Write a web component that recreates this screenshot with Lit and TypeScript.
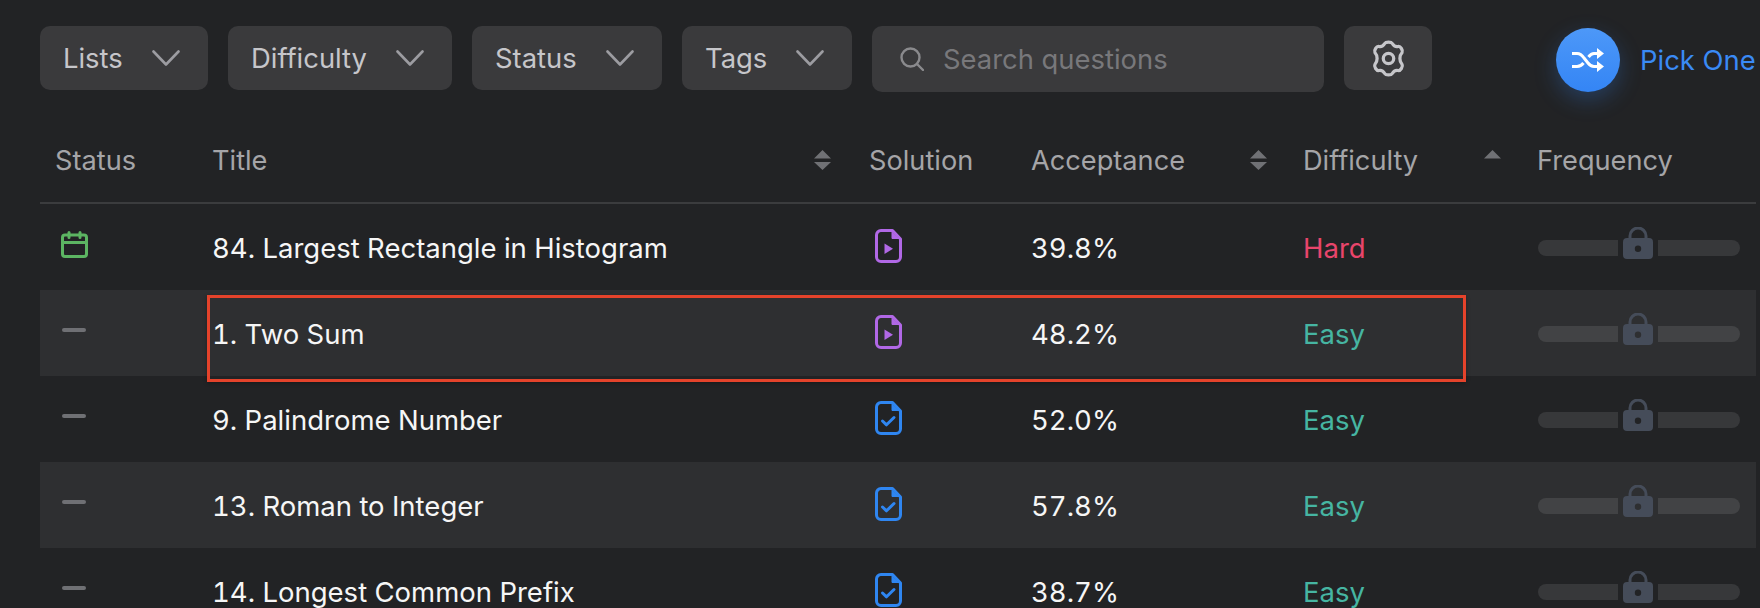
import { css, html, LitElement, svg } from "lit";
import { customElement } from "lit/decorators.js";

type Row = { title: string; icon: "play" | "check"; acc: string; diff: "Hard" | "Easy"; status: "todo" | "none" };

const ROWS: Row[] = [
  { title: "84. Largest Rectangle in Histogram", icon: "play", acc: "39.8%", diff: "Hard", status: "todo" },
  { title: "1. Two Sum", icon: "play", acc: "48.2%", diff: "Easy", status: "none" },
  { title: "9. Palindrome Number", icon: "check", acc: "52.0%", diff: "Easy", status: "none" },
  { title: "13. Roman to Integer", icon: "check", acc: "57.8%", diff: "Easy", status: "none" },
  { title: "14. Longest Common Prefix", icon: "check", acc: "38.7%", diff: "Easy", status: "none" },
];

const chevron = html`<svg class="chev" viewBox="0 0 28 16" fill="none" stroke="currentColor" stroke-width="2.6" stroke-linecap="round" stroke-linejoin="round"><path d="M1.5 1.5 14 14.5 26.5 1.5" /></svg>`;

const searchIcon = html`<svg class="search-ico" viewBox="0 0 24 24" fill="none" stroke="currentColor" stroke-width="2.4" stroke-linecap="round"><circle cx="10.5" cy="10.5" r="9" /><path d="m17 17 6 6" /></svg>`;

const gearIcon = html`<svg class="gear" viewBox="0 0 30 34" fill="none" stroke="currentColor" stroke-width="3" stroke-linejoin="round"><path d="M11.500 3.200C12.500 1.500 17.500 1.500 18.500 3.200 19.800 5.500 21.500 6.500 23.800 6 26 5.500 28.500 9.500 27.500 11.500 24.800 14.500 24.800 19.500 27.500 22.500 28.500 24.500 26 28.500 23.800 28 21.500 27.500 19.800 28.500 18.500 30.800 17.500 32.500 12.500 32.500 11.500 30.800 10.200 28.500 8.500 27.500 6.200 28 4 28.500 1.500 24.500 2.500 22.500 5.200 19.500 5.200 14.500 2.500 11.500 1.500 9.500 4 5.500 6.200 6 8.500 6.500 10.200 5.500 11.500 3.200z" /><circle cx="15" cy="17" r="4.800" /></svg>`;

const shuffleIcon = html`<svg class="shuffle" viewBox="0 0 32 24" fill="none" stroke="#fff" stroke-width="3" stroke-linejoin="round"><path d="M0 5.500h5c3 0 5 1.500 7 4.500l4 5c1.500 2 4 3.500 6 3.500h4" /><path d="M0 18.500h5c3 0 5-1.500 6.500-3.500M16.500 9c1.500-2 3.500-3.500 5.500-3.500h4" /><path d="M25 0l7 5.500-7 5.500zM25 13l7 5.500-7 5.500z" fill="#fff" stroke="none" /></svg>`;

const sortBoth = html`<svg class="sort" viewBox="0 0 17 20"><path d="M8.500 0 17 8.500H0zM0 12h17l-8.500 8z" /></svg>`;
const sortUp = html`<svg class="sort up" viewBox="0 0 17 20"><path d="M8.500 0 17 8.500H0z" /></svg>`;

const calendar = html`<svg class="cal" viewBox="0 0 27 27" fill="none" stroke="currentColor" stroke-width="3" stroke-linecap="round" stroke-linejoin="round"><rect x="1.500" y="4" width="24" height="21.500" rx="2.500" /><path d="M1.500 11.500h24M8 1.500v5M19 1.500v5" /></svg>`;

const fileIcon = (kind: Row["icon"]) => html`<svg class="file ${kind}" viewBox="0 0 27 34" fill="none" stroke="currentColor" stroke-width="3" stroke-linecap="round" stroke-linejoin="round">
  <path d="M6 1.500h11.500l8 8.500v18a4.500 4.500 0 0 1-4.500 4.500H6A4.500 4.500 0 0 1 1.500 28V6A4.500 4.500 0 0 1 6 1.500z" />
  ${kind === "play"
    ? svg`<path d="M17 3v6.500h7z" fill="currentColor" stroke-width="1" /><path d="M9.500 14.500v10.500l8.500-5.250z" fill="currentColor" stroke="none" />`
    : svg`<path d="M17 3v6.500h7z" fill="currentColor" stroke-width="1" /><path d="m7.500 20 4 3.800 7.500-7.300" />`}
</svg>`;

const lockIcon = html`<svg class="lock" viewBox="0 0 30 32"><path d="M7 13V9a8 8 0 0 1 16 0v4" fill="none" stroke="currentColor" stroke-width="3" /><path fill-rule="evenodd" fill="currentColor" d="M4 11h22a4 4 0 0 1 4 4v13a4 4 0 0 1-4 4H4a4 4 0 0 1-4-4V15a4 4 0 0 1 4-4zM15 18.500a3.200 3.200 0 1 0 0 6.400 3.200 3.200 0 0 0 0-6.400z" /></svg>`;

@customElement("app-root")
class AppRoot extends LitElement {
  static styles = css`
    :host {
      display: block;
      height: 608px;
      overflow: hidden;
      background: #222325;
      font-family: Inter, "Liberation Sans", sans-serif;
      font-size: 27.4px;
    }
    .toolbar {
      display: flex;
      align-items: flex-start;
      gap: 20px;
      padding: 26px 0 0 40px;
      height: 66px;
    }
    .toolbar > * {
      flex: none;
    }
    .btn {
      display: flex;
      align-items: center;
      justify-content: space-between;
      box-sizing: border-box;
      height: 64px;
      padding: 0 28px 0 23px;
      border-radius: 10px;
      background: #3a3a3c;
      color: #c6c6ca;
    }
    .lists {
      width: 168px;
    }
    .difficulty {
      width: 224px;
    }
    .status-btn {
      width: 190px;
    }
    .tags {
      width: 170px;
    }
    .chev {
      width: 28px;
      height: 16px;
      color: #9c9ca1;
    }
    .search {
      display: flex;
      align-items: center;
      gap: 19px;
      box-sizing: border-box;
      width: 452px;
      height: 66px;
      padding: 0 28px;
      border-radius: 10px;
      background: #3a3a3c;
      color: #78787b;
    }
    .search-ico {
      width: 24px;
      height: 24px;
      color: #8a8a8d;
    }
    .gear-btn {
      justify-content: center;
      width: 88px;
      padding: 0;
    }
    .gear {
      width: 33px;
      height: 37px;
      color: #c6c6ca;
    }
    .pick {
      display: flex;
      align-items: center;
      gap: 20px;
      margin: 2px 0 0 104px;
      color: #3a8af5;
      white-space: nowrap;
    }
    .circle {
      display: flex;
      align-items: center;
      justify-content: center;
      width: 64px;
      height: 64px;
      border-radius: 50%;
      background: linear-gradient(#4d98f8, #3485f5);
      box-shadow: 0 8px 22px rgba(52, 133, 245, 0.28);
    }
    .shuffle {
      width: 32px;
      height: 24px;
    }
    .table {
      margin: 0 4px 0 40px;
    }
    .head,
    .row {
      display: grid;
      grid-template-columns: 158px 656px 162px 272px 234px 234px;
    }
    .head {
      box-sizing: border-box;
      height: 112px;
      padding-top: 26px;
      align-items: center;
      border-bottom: 2px solid #3b3c3e;
      color: #a5a5a8;
      font-size: 27.2px;
    }
    .hcell {
      display: flex;
      align-items: center;
      justify-content: space-between;
      padding: 0 21px 0 15px;
    }
    .hcell.title {
      padding: 0 23px 0 14px;
    }
    .sort {
      width: 17px;
      height: 20px;
      fill: #707175;
    }
    .row {
      position: relative;
      height: 86px;
      align-items: center;
      color: #f6f6f6;
      font-size: 27.5px;
      font-variant-numeric: tabular-nums;
    }
    .row.alt {
      background: #2e2f31;
    }
    .cell {
      padding: 2px 0 0 15px;
    }
    .cell.title {
      padding-left: 14px;
    }
    .status {
      display: flex;
      align-items: center;
      padding-left: 22px;
      padding-bottom: 6px;
    }
    .cal {
      width: 27px;
      height: 27px;
      margin-left: -1px;
      color: #5cb562;
    }
    .dash {
      width: 24px;
      height: 4px;
      border-radius: 2px;
      background: #6f7074;
    }
    .file {
      display: block;
      width: 27px;
      height: 34px;
      margin: 0 0 5px 6px;
    }
    .file.play {
      color: #b168e6;
    }
    .file.check {
      color: #2f86f1;
    }
    .hard {
      color: #e8456b;
    }
    .easy {
      color: #46b5a2;
    }
    .freq {
      display: flex;
      align-items: flex-end;
      gap: 5px;
      padding: 0 0 0 16px;
      margin-top: -8px;
    }
    .bar {
      height: 16px;
      width: 80px;
      margin-bottom: 3px;
      background: #37383a;
    }
    .bar.l {
      border-radius: 8px 0 0 8px;
    }
    .bar.r {
      width: 82px;
      border-radius: 0 8px 8px 0;
    }
    .alt .bar {
      background: #424345;
    }
    .lock {
      width: 30px;
      height: 32px;
      color: #454c59;
    }
    .mark {
      position: absolute;
      left: 167px;
      top: 5px;
      width: 1259px;
      height: 87px;
      box-sizing: border-box;
      border: 3px solid #e5432b;
      box-shadow: 0 1px 4px rgba(0, 0, 0, 0.3);
      pointer-events: none;
    }
  `;

  render() {
    return html`
      <div class="toolbar">
        <div class="btn lists">Lists ${chevron}</div>
        <div class="btn difficulty">Difficulty ${chevron}</div>
        <div class="btn status-btn">Status ${chevron}</div>
        <div class="btn tags">Tags ${chevron}</div>
        <div class="search">${searchIcon}<span>Search questions</span></div>
        <div class="btn gear-btn">${gearIcon}</div>
        <div class="pick"><span class="circle">${shuffleIcon}</span><span>Pick One</span></div>
      </div>
      <div class="table">
        <div class="head">
          <div class="hcell">Status</div>
          <div class="hcell title">Title ${sortBoth}</div>
          <div class="hcell">Solution</div>
          <div class="hcell">Acceptance ${sortBoth}</div>
          <div class="hcell">Difficulty ${sortUp}</div>
          <div class="hcell">Frequency</div>
        </div>
        ${ROWS.map(
          (r, i) => html`<div class="row ${i % 2 ? "alt" : ""}">
            <div class="status">${r.status === "todo" ? calendar : html`<div class="dash"></div>`}</div>
            <div class="cell title">${r.title}</div>
            <div class="cell">${fileIcon(r.icon)}</div>
            <div class="cell">${r.acc}</div>
            <div class="cell ${r.diff === "Hard" ? "hard" : "easy"}">${r.diff}</div>
            <div class="freq"><div class="bar l"></div>${lockIcon}<div class="bar r"></div></div>
            ${i === 1 ? html`<div class="mark"></div>` : ""}
          </div>`
        )}
      </div>
    `;
  }
}
